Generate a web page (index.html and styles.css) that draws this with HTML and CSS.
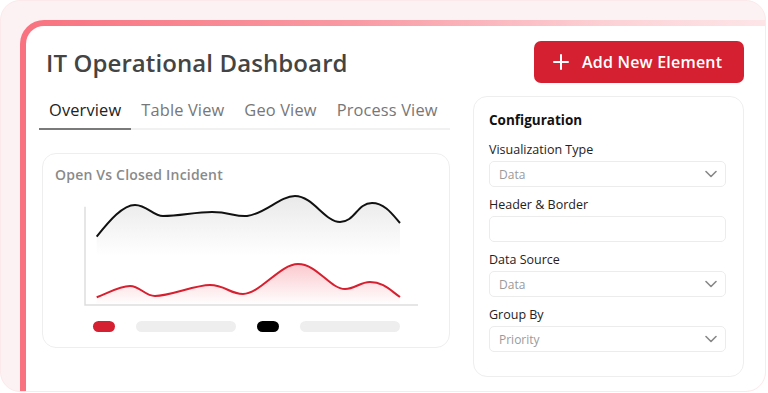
FILE: index.html
```html
<!DOCTYPE html>
<html lang="en">
<head>
  <meta charset="UTF-8">
  <meta name="viewport" content="width=device-width, initial-scale=1.0">
  <title>IT Operational Dashboard</title>
  <link rel="stylesheet" href="styles.css">
</head>
<body>

<div class="frame">
  <div class="panel-edge">
    <div class="panel">

      <div class="header">
        <h1 class="title">IT Operational Dashboard</h1>
        <button class="add-btn">
          <svg width="16" height="16" viewBox="0 0 16 16"><path d="M8 1v14M1 8h14" stroke="#fff" stroke-width="2" stroke-linecap="round"/></svg>
          Add New Element
        </button>
      </div>

      <div class="content">
        <div class="main-col">
          <div class="tabs">
            <div class="tab active">Overview</div>
            <div class="tab">Table View</div>
            <div class="tab">Geo View</div>
            <div class="tab">Process View</div>
          </div>

          <div class="chart-card">
            <div class="chart-title">Open Vs Closed Incident</div>
            <svg class="chart" width="380" height="122" viewBox="0 0 380 122">
              <defs>
                <linearGradient id="grayFill" x1="0" y1="0" x2="0" y2="1">
                  <stop offset="0" stop-color="#e9e9e9"/>
                  <stop offset="0.55" stop-color="#ffffff"/>
                </linearGradient>
                <linearGradient id="redFill" x1="0" y1="0" x2="0" y2="1">
                  <stop offset="0" stop-color="#fbc9ce"/>
                  <stop offset="1" stop-color="#ffffff"/>
                </linearGradient>
              </defs>
              <!-- closed (black) -->
              <path d="M41.7,46.7 C55,30 68,15 80,15 C92,15 98,26 108,26 C125,26 140,22 157,22 C175,22 180,27 192,26 C210,24 225,6 240,6 C258,6 270,32 285,32 C300,32 302,13 317,13 C330,13 338,25 345,33 L345,115 L41.7,115 Z" fill="url(#grayFill)"/>
              <path d="M41.7,46.7 C55,30 68,15 80,15 C92,15 98,26 108,26 C125,26 140,22 157,22 C175,22 180,27 192,26 C210,24 225,6 240,6 C258,6 270,32 285,32 C300,32 302,13 317,13 C330,13 338,25 345,33" fill="none" stroke="#111" stroke-width="2"/>
              <!-- open (red) -->
              <path d="M41.7,107.3 C55,102 65,96 75,96 C85,96 90,106 100,106 C115,106 140,95 155,95 C170,95 175,104 188,104 C205,104 225,74 243,74 C262,74 275,99 290,99 C300,99 305,92 315,92 C328,92 335,100 345,107 L345,115 L41.7,115 Z" fill="url(#redFill)"/>
              <path d="M41.7,107.3 C55,102 65,96 75,96 C85,96 90,106 100,106 C115,106 140,95 155,95 C170,95 175,104 188,104 C205,104 225,74 243,74 C262,74 275,99 290,99 C300,99 305,92 315,92 C328,92 335,100 345,107" fill="none" stroke="#d7202f" stroke-width="2"/>
              <!-- axes -->
              <path d="M30,16.7 V115 H363" fill="none" stroke="#dedede" stroke-width="1.5"/>
            </svg>
            <div class="legend">
              <span class="pill red"></span>
              <span class="bar"></span>
              <span class="pill black"></span>
              <span class="bar"></span>
            </div>
          </div>
        </div>

        <div class="config-card">
          <div class="config-title">Configuration</div>

          <div class="field">
            <label>Visualization Type</label>
            <div class="select">Data
              <svg width="12" height="8" viewBox="0 0 12 8"><path d="M1 1.5l5 5 5-5" fill="none" stroke="#888" stroke-width="1.6" stroke-linecap="round" stroke-linejoin="round"/></svg>
            </div>
          </div>

          <div class="field">
            <label>Header &amp; Border</label>
            <div class="select"></div>
          </div>

          <div class="field">
            <label>Data Source</label>
            <div class="select">Data
              <svg width="12" height="8" viewBox="0 0 12 8"><path d="M1 1.5l5 5 5-5" fill="none" stroke="#888" stroke-width="1.6" stroke-linecap="round" stroke-linejoin="round"/></svg>
            </div>
          </div>

          <div class="field">
            <label>Group By</label>
            <div class="select">Priority
              <svg width="12" height="8" viewBox="0 0 12 8"><path d="M1 1.5l5 5 5-5" fill="none" stroke="#888" stroke-width="1.6" stroke-linecap="round" stroke-linejoin="round"/></svg>
            </div>
          </div>
        </div>
      </div>

    </div>
  </div>
</div>

</body>
</html>
```

FILE: styles.css
```css
body {
  margin: 0;
  background-color: #fff;
  font-family: "Open Sans", Lato, sans-serif;
}

.frame {
  width: 764px;
  height: 390px;
  border: 1px solid #fbe9eb;
  border-radius: 20px;
  background-color: #fdf2f3;
  overflow: hidden;
  display: flex;
  flex-direction: column;
}

.panel-edge {
  flex: 1;
  margin: 19px 0 0 19px;
  padding: 6px 0 0 6px;
  border-top-left-radius: 24px;
  background: linear-gradient(to right, #f8727f 0%, #f99aa3 45%, #fcd3d7 80%, #fde5e7 100%);
  display: flex;
}

.panel {
  flex: 1;
  background-color: #fff;
  border-top-left-radius: 18px;
  padding: 15px 21px 0 13px;
}

.header {
  display: flex;
  justify-content: space-between;
  align-items: center;
}

.title {
  margin: 0 0 0 7px;
  font-size: 24px;
  font-weight: 600;
  color: #444;
  letter-spacing: 0.1px;
}

.add-btn {
  display: flex;
  align-items: center;
  gap: 13px;
  width: 210px;
  height: 42px;
  padding: 0 0 0 19px;
  border: none;
  border-radius: 7px;
  background-color: #d42030;
  color: #fff;
  font-family: inherit;
  font-size: 16px;
  font-weight: 600;
  letter-spacing: 0.2px;
}

.content {
  display: grid;
  grid-template-columns: 411px 271px;
  gap: 23px;
  margin-top: 13px;
}

.tabs {
  display: flex;
  border-bottom: 2px solid #f1f1f1;
}

.tab {
  flex-shrink: 0;
  white-space: nowrap;
  padding: 4px 10px 8px 10px;
  margin-bottom: -2px;
  font-size: 16.4px;
  line-height: 20px;
  letter-spacing: 0.15px;
  color: #777;
  border-bottom: 2px solid transparent;
}

.tab.active {
  color: #222;
  border-bottom-color: #7a7a7a;
}

.chart-card {
  margin: 23px 0 0 3px;
  padding: 12px 12px 15px 12px;
  border: 1px solid #eeeeee;
  border-radius: 14px;
}

.chart-title {
  font-size: 14px;
  line-height: 18px;
  font-weight: 600;
  color: #8a8a8a;
  letter-spacing: 0.2px;
}

.chart {
  display: block;
  margin-top: 6px;
}

.legend {
  display: flex;
  align-items: center;
  gap: 21px;
  margin: 9px 0 0 38px;
}

.pill {
  width: 22px;
  height: 11px;
  border-radius: 6px;
}

.pill.red { background-color: #d42030; }
.pill.black { background-color: #000; }

.bar {
  width: 100px;
  height: 11px;
  border-radius: 6px;
  background-color: #eeeeee;
}

.config-card {
  height: 281px;
  box-sizing: border-box;
  padding: 14px 17px 0 15px;
  border: 1px solid #eeeeee;
  border-radius: 14px;
}

.config-title {
  font-size: 13.5px;
  line-height: 18px;
  font-weight: 700;
  color: #111;
  margin-bottom: 13px;
}

.field {
  margin-bottom: 10px;
}

.field label {
  display: block;
  font-size: 12.5px;
  line-height: 16px;
  color: #222;
}

.select {
  box-sizing: border-box;
  display: flex;
  align-items: center;
  justify-content: space-between;
  height: 26px;
  margin-top: 3px;
  padding: 0 8px 0 9px;
  border: 1px solid #ececec;
  border-radius: 5px;
  font-size: 12px;
  color: #9a9a9a;
}
```
